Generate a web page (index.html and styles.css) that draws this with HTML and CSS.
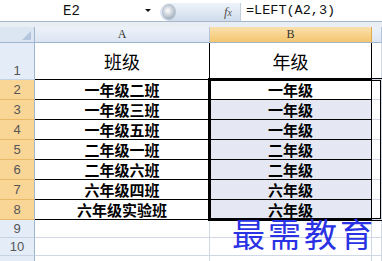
FILE: index.html
```html
<!DOCTYPE html>
<html lang="zh-CN">
  <head>
    <meta charset="UTF-8" />
    <title>LEFT 函数</title>
    <link rel="stylesheet" href="styles.css">
  </head>
  <body>
    <div class="formula-bar">
      <div class="name-box">
        <span class="name">E2</span>
        <span class="drop"></span>
      </div>
      <div class="fx-area">
        <span class="knob"></span>
        <span class="fx"><i>f</i><i class="x">x</i></span>
      </div>
      <div class="formula">=LEFT(A2,3)</div>
    </div>
    <div class="band"></div>

    <div class="sheet">
      <!-- column headers -->
      <div class="corner"><span class="tri"></span></div>
      <div class="col-head">A</div>
      <div class="col-head active">B</div>
      <div class="col-head">&nbsp;</div>

      <!-- row 1 -->
      <div class="row-head tall">1</div>
      <div class="cell title">班级</div>
      <div class="cell title">年级</div>
      <div class="cell grid"></div>

      <div class="row-head active">2</div>
      <div class="cell data">一年级二班</div>
      <div class="cell data current">一年级</div>
      <div class="cell grid"></div>

      <div class="row-head active">3</div>
      <div class="cell data">一年级三班</div>
      <div class="cell data picked">一年级</div>
      <div class="cell grid"></div>

      <div class="row-head active">4</div>
      <div class="cell data">一年级五班</div>
      <div class="cell data picked">一年级</div>
      <div class="cell grid"></div>

      <div class="row-head active">5</div>
      <div class="cell data">二年级一班</div>
      <div class="cell data picked">二年级</div>
      <div class="cell grid"></div>

      <div class="row-head active">6</div>
      <div class="cell data">二年级六班</div>
      <div class="cell data picked">二年级</div>
      <div class="cell grid"></div>

      <div class="row-head active">7</div>
      <div class="cell data">六年级四班</div>
      <div class="cell data picked">六年级</div>
      <div class="cell grid"></div>

      <div class="row-head active">8</div>
      <div class="cell data">六年级实验班</div>
      <div class="cell data picked">六年级</div>
      <div class="cell grid"></div>

      <div class="row-head">9</div>
      <div class="cell grid"></div>
      <div class="cell grid"></div>
      <div class="cell grid"></div>

      <div class="row-head">10</div>
      <div class="cell grid"></div>
      <div class="cell grid"></div>
      <div class="cell grid"></div>

      <div class="row-head"></div>
      <div class="cell grid"></div>
      <div class="cell grid"></div>
      <div class="cell grid"></div>

      <!-- selection box and watermark sit over the cells -->
      <div class="selection"></div>
      <div class="watermark">最需教育</div>
    </div>
  </body>
</html>
```

FILE: styles.css
```css
body {
  margin: 0;
  width: 382px;
  height: 261px;
  overflow: hidden;
  background-color: white;
  font-family: "Noto Sans CJK SC", sans-serif;
}
.formula-bar {
  display: flex;
  height: 22px;
  box-sizing: border-box;
  border-bottom: 1px solid #a7b7ca;
  background-color: white;
}
.name-box {
  width: 160px;
  display: flex;
  align-items: center;
}
.name {
  margin-left: 63px;
  font-family: "Liberation Mono", monospace;
  font-size: 14px;
  color: #111;
}
.drop {
  margin-left: 65px;
  width: 0;
  height: 0;
  border-left: 3px solid transparent;
  border-right: 3px solid transparent;
  border-top: 3px solid #111;
}
.fx-area {
  width: 80px;
  margin-top: 3px;
  display: flex;
  align-items: center;
  justify-content: space-between;
  background: linear-gradient(#eef3fa, #cfdcec);
  border-radius: 9px 0 0 9px;
  border-right: 1px solid #c3cfdd;
}
.knob {
  width: 12px;
  height: 14px;
  margin-left: 2px;
  border-radius: 50%;
  background: radial-gradient(circle at 40% 40%, #ffffff, #aab5c2 70%);
  border: 1px solid #b8c4d2;
}
.fx {
  margin-right: 8px;
  font-family: "Liberation Serif", serif;
  font-size: 13px;
  color: #555;
}
.fx .x {
  font-size: 10px;
}
.formula {
  padding-left: 5px;
  display: flex;
  align-items: center;
  font-family: "Liberation Mono", monospace;
  font-size: 13.5px;
  color: #111;
}
.band {
  height: 5px;
  background-color: #e9eef5;
}
.sheet {
  position: relative;
  display: grid;
  grid-template-columns: 35px 175px 162px 10px;
  grid-template-rows: 16px 37px repeat(7, 20px) 18px 18px 18px;
}
.corner {
  background-color: #dce6f2;
  border-right: 1px solid #9eb6ce;
  border-bottom: 1px solid #9eb6ce;
  position: relative;
}
.tri {
  position: absolute;
  right: 3px;
  bottom: 2px;
  width: 0;
  height: 0;
  border-left: 9px solid transparent;
  border-bottom: 9px solid #b3c6dd;
}
.col-head {
  display: flex;
  align-items: center;
  justify-content: center;
  background: linear-gradient(#edf2f9, #dbe5f2);
  border-right: 1px solid #b3c6dd;
  border-bottom: 1px solid #9eb6ce;
  font-family: "Liberation Serif", serif;
  font-size: 12px;
  color: #333;
}
.col-head.active {
  background: linear-gradient(#fae0ae, #f4c66e);
  border-right-color: #e2a94d;
}
.row-head {
  display: flex;
  align-items: flex-end;
  justify-content: center;
  background-color: #e4ecf7;
  border-right: 1px solid #9eb6ce;
  border-bottom: 1px solid #c5d3e3;
  font-family: "Liberation Sans", sans-serif;
  font-size: 13px;
  color: #555;
  line-height: 17px;
}
.row-head.active {
  background-color: #f9d596;
  border-bottom-color: #e8b966;
  line-height: 19px;
}
.cell {
  display: flex;
  align-items: center;
  justify-content: center;
  box-sizing: border-box;
  border-right: 1px solid #000;
  border-bottom: 1px solid #000;
  color: #000;
}
.cell.grid {
  border-right-color: #d0d7e5;
  border-bottom-color: #d0d7e5;
}
.cell.title {
  align-items: flex-end;
  padding-bottom: 5px;
  font-size: 18px;
}
.cell.data {
  font-size: 15px;
  font-weight: bold;
  line-height: 19px;
}
.cell.picked {
  background-color: #e5e8f3;
}
.selection {
  position: absolute;
  grid-column: 3;
  grid-row: 3 / 10;
  top: -2px;
  left: -2px;
  right: -1px;
  bottom: -1px;
  border: 3px double #000;
  pointer-events: none;
}
.watermark {
  position: absolute;
  grid-column: 3 / 5;
  grid-row: 10 / 12;
  top: -5px;
  left: 22px;
  font-size: 33px;
  line-height: 36px;
  letter-spacing: 3px;
  color: #2a32e4;
  white-space: nowrap;
}
```
